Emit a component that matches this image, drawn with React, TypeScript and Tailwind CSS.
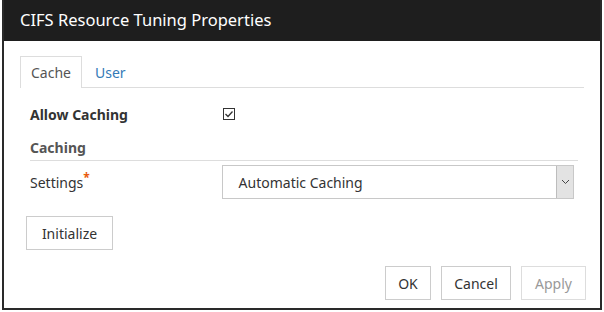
export default function App() {
  return (
    <div className="w-[604px] h-[312px] bg-white" style={{ fontFamily: '"Noto Sans", "Open Sans", sans-serif' }}>
      <div className="ml-[2px] w-[600px] h-[310px] border-2 border-t-0 border-[#2a2a2a] flex flex-col">
        <div className="h-[41px] bg-[#1e1e1e] flex items-center pl-[16px] text-white text-[16.5px]">
          CIFS Resource Tuning Properties
        </div>

        <div className="flex-1 px-[24px] pt-[15px] text-[14px] text-[#333]">
          {/* tabs */}
          <div className="flex border-b border-[#dddddd] h-[32px] mx-[-8px]">
            <div className="px-[10px] h-[32px] flex items-center border border-b-0 border-[#dddddd] bg-white mb-[-1px] text-[#555]">
              Cache
            </div>
            <div className="px-[13px] h-[32px] flex items-center text-[#337ab7]">User</div>
          </div>

          <div className="px-[2px]">
            <div className="flex items-center h-[26px] mt-[13px]">
              <div className="w-[193px] font-bold">Allow Caching</div>
              <div className="w-[12px] h-[12px] border border-[#333] flex items-center justify-center">
                <svg width="10" height="10" viewBox="0 0 10 10">
                  <path d="M1.5 5 L4 7.5 L8.5 2.5" fill="none" stroke="#333" strokeWidth="1.3" />
                </svg>
              </div>
            </div>

            <div className="mt-[10px] font-bold text-[#555] pb-[2px] border-b border-[#dddddd] w-[548px]">Caching</div>

            <div className="flex items-center mt-[4px] h-[34px]">
              <div className="w-[193px]">
                Settings<sup className="text-[#e8590c] text-[12px] font-bold">*</sup>
              </div>
              <div className="w-[355px] h-[34px] border border-[#c8c8c8] flex items-center justify-between">
                <span className="pl-[16px] text-[#333]">Automatic Caching</span>
                <div className="w-[17px] h-[32px] bg-[#e3e3e3] border-l border-[#bdbdbd] flex items-center justify-center">
                  <svg width="9" height="6" viewBox="0 0 9 6">
                    <path d="M1 1 L4.5 4.5 L8 1" fill="none" stroke="#444" strokeWidth="1" />
                  </svg>
                </div>
              </div>
            </div>
          </div>

          <button className="mt-[17px] ml-[-2px] h-[34px] w-[87px] border border-[#cccccc] bg-white text-[#333]">
            Initialize
          </button>

          <div className="flex justify-end gap-[10px] mt-[16px] mr-[-10px]">
            <button className="h-[34px] w-[46px] border border-[#cccccc] bg-white text-[#333]">OK</button>
            <button className="h-[34px] w-[70px] border border-[#cccccc] bg-white text-[#333]">Cancel</button>
            <button className="h-[34px] w-[65px] border border-[#dddddd] bg-white text-[#999]">Apply</button>
          </div>
        </div>
      </div>
    </div>
  );
}
